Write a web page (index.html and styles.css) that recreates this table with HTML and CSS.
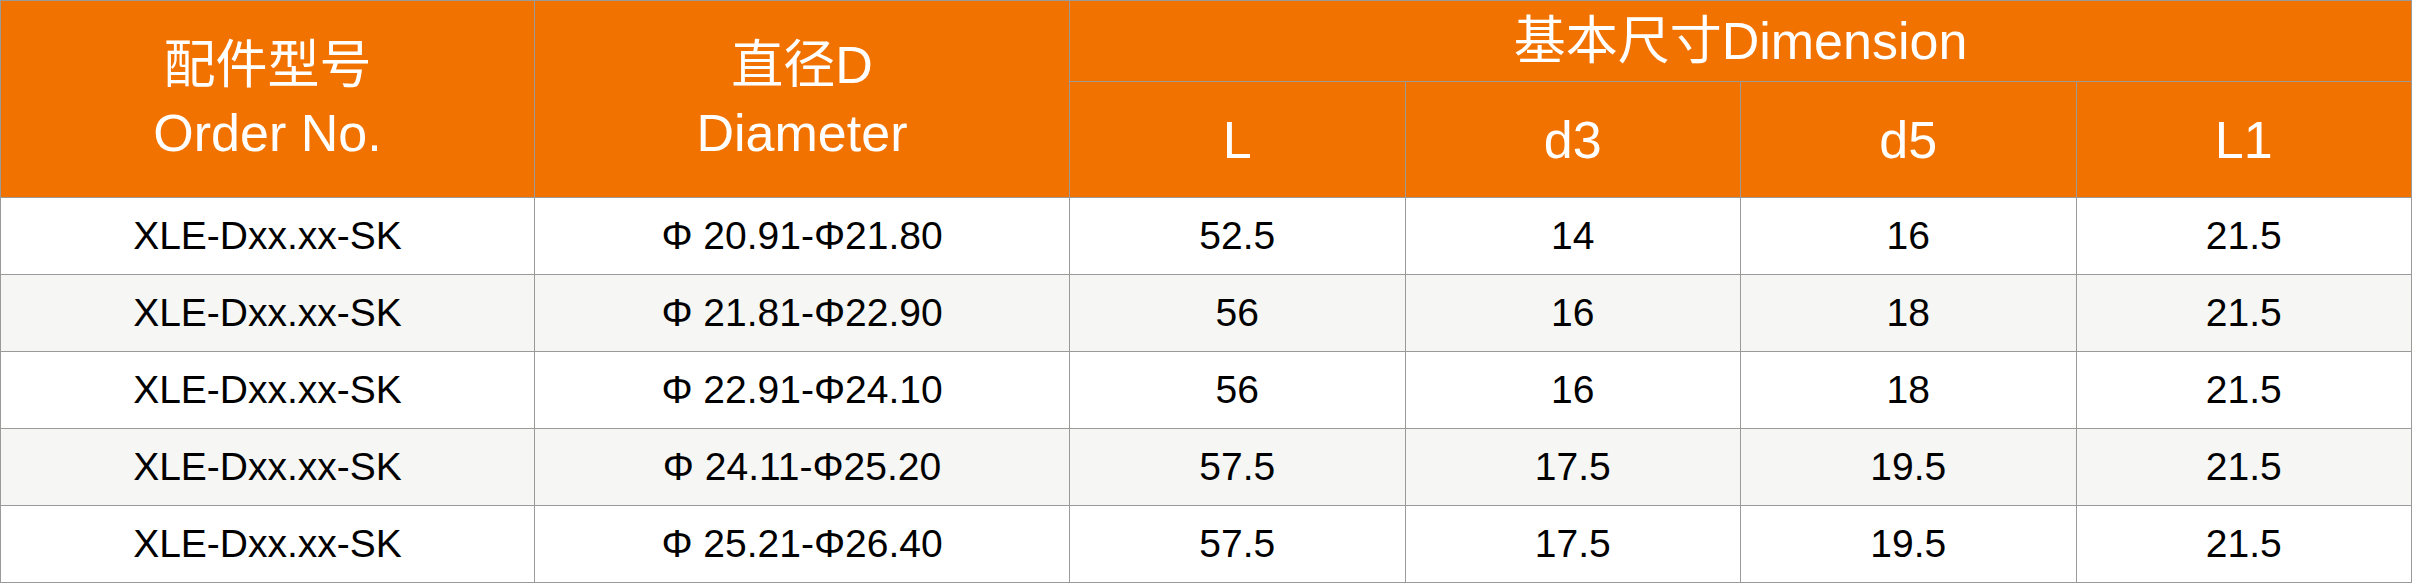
FILE: index.html
```html
<!DOCTYPE html>
<html lang="zh">
<head>
<meta charset="utf-8">
<title>XLE-SK Dimensions</title>
<link rel="stylesheet" href="styles.css">
</head>
<body>
<table class="spec">
  <colgroup>
    <col class="c-order">
    <col class="c-dia">
    <col class="c-dim">
    <col class="c-dim">
    <col class="c-dim">
    <col class="c-dim">
  </colgroup>
  <thead>
    <tr class="h1">
      <th rowspan="2">配件型号<br>Order No.</th>
      <th rowspan="2">直径D<br>Diameter</th>
      <th colspan="4">基本尺寸Dimension</th>
    </tr>
    <tr class="h2">
      <th>L</th>
      <th>d3</th>
      <th>d5</th>
      <th>L1</th>
    </tr>
  </thead>
  <tbody>
    <tr><td>XLE-Dxx.xx-SK</td><td>Φ 20.91-Φ21.80</td><td>52.5</td><td>14</td><td>16</td><td>21.5</td></tr>
    <tr><td>XLE-Dxx.xx-SK</td><td>Φ 21.81-Φ22.90</td><td>56</td><td>16</td><td>18</td><td>21.5</td></tr>
    <tr><td>XLE-Dxx.xx-SK</td><td>Φ 22.91-Φ24.10</td><td>56</td><td>16</td><td>18</td><td>21.5</td></tr>
    <tr><td>XLE-Dxx.xx-SK</td><td>Φ 24.11-Φ25.20</td><td>57.5</td><td>17.5</td><td>19.5</td><td>21.5</td></tr>
    <tr><td>XLE-Dxx.xx-SK</td><td>Φ 25.21-Φ26.40</td><td>57.5</td><td>17.5</td><td>19.5</td><td>21.5</td></tr>
  </tbody>
</table>
</body>
</html>
```

FILE: styles.css
```css
html, body {
  margin: 0;
  padding: 0;
  background: #ffffff;
}

.spec {
  width: 2411px;
  border-collapse: collapse;
  table-layout: fixed;
  font-family: "Liberation Sans", Arial, "Noto Sans CJK SC", sans-serif;
}

.c-order { width: 534px; }
.c-dia { width: 535px; }
.c-dim { width: 335.5px; }

.spec th,
.spec td {
  border: 1px solid #9a9a9a;
  text-align: center;
  vertical-align: middle;
  padding: 0;
}

.spec th {
  background: #f27200;
  color: #ffffff;
  font-weight: normal;
  font-size: 52px;
  line-height: 68px;
}

.h1 { height: 81px; }
.h2 { height: 116px; }

.spec td {
  font-size: 39px;
  color: #000000;
  height: 76px;
}

.spec tbody tr:nth-child(even) td {
  background: #f6f6f4;
}
```
